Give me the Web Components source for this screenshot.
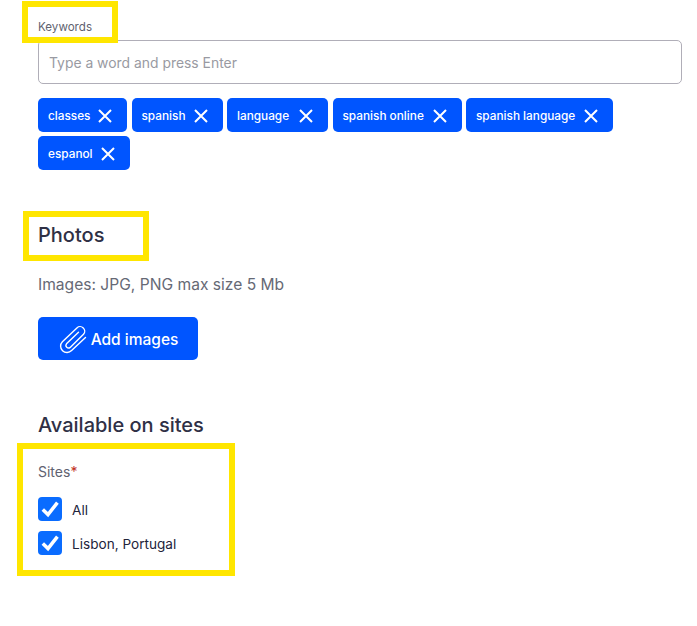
<!DOCTYPE html>
<html><head><meta charset="utf-8">
<style>
html,body{margin:0;padding:0;background:#fff}
body{width:697px;height:626px;overflow:hidden;position:relative;font-family:Inter,"Liberation Sans",sans-serif}
</style></head><body>
<template id="chip-t"><style>
:host{display:inline-flex;align-items:center;justify-content:space-between;height:34px;box-sizing:border-box;background:#0055ff;color:#fff;border-radius:5px;padding:2px 15px 0 10px;font-size:11.8px;font-weight:500}
svg{width:14px;height:14px;display:block}
</style><slot></slot><svg viewBox="0 0 14 14"><path d="M1 1 13 13M13 1 1 13" stroke="#fff" stroke-width="2" fill="none"/></svg></template>
<template id="check-t"><style>
:host{display:flex;align-items:center;gap:10px;height:24px;font-size:13.6px;color:#22233a}
.b{width:24px;height:24px;border-radius:4px;background:#0a6cff;display:flex;align-items:center;justify-content:center}
svg{width:24px;height:24px;display:block}
.t{padding-top:2px}
</style><span class="b"><svg viewBox="0 0 24 24"><path d="M4.8 12.5 10 17.6 19.4 5.6" stroke="#fff" stroke-width="3.5" fill="none"/></svg></span><span class="t"><slot></slot></span></template>
<script>
function def(name,tpl){customElements.define(name,class extends HTMLElement{constructor(){super();this.attachShadow({mode:'open'}).appendChild(document.getElementById(tpl).content.cloneNode(true))}})}
def('tag-chip','chip-t');def('site-check','check-t');
customElements.define('page-form',class extends HTMLElement{constructor(){super();this.attachShadow({mode:'open'}).innerHTML=`<style>
:host{display:flex;flex-direction:column;padding:20px 15px 0 38px;color:#2f3045}
.lab{font-size:11.6px;line-height:14px;color:#5f6270}
.input{margin-top:6px;height:44px;box-sizing:border-box;border:1px solid #b0aeb8;border-radius:5px;padding:2px 10px 0;display:flex;align-items:center;font-size:13.9px;color:#999aa2}
.chips{margin-top:14px;display:grid;grid-template-columns:89px 91px 101px 129px 147px;column-gap:4.5px;row-gap:4px;justify-content:start}
.c6{width:92px}
h2{margin:0;font-size:20px;line-height:26px;font-weight:450;color:#2f3045}
.ph{margin-top:52px}
.hint{margin-top:27px;font-size:15.6px;line-height:20px;color:#666975}
.btn{margin-top:22px;width:160px;height:43px;background:#0055ff;color:#fff;border-radius:5px;display:flex;align-items:center;justify-content:center;gap:3px;font-size:15.5px;font-weight:500}
.btn svg{width:30px;height:30px;display:block}
.btn span{padding-top:2px}
.av{margin-top:52px}
.sites{margin-top:25px;font-size:14px;line-height:18px;color:#5f6270}
.sites b{color:#c0301c;font-weight:400}
.list{margin-top:16px;display:flex;flex-direction:column;gap:10px}
</style>
<div class="lab">Keywords</div>
<div class="input">Type a word and press Enter</div>
<div class="chips"><tag-chip>classes</tag-chip><tag-chip>spanish</tag-chip><tag-chip>language</tag-chip><tag-chip>spanish online</tag-chip><tag-chip>spanish language</tag-chip><tag-chip class="c6">espanol</tag-chip></div>
<h2 class="ph">Photos</h2>
<div class="hint">Images: JPG, PNG max size 5 Mb</div>
<div class="btn"><svg viewBox="0 0 30 30"><path d="M27.5 13.5 13.6 26.6a6.4 6.4 0 0 1-9.2-8.9L18.9 3.9a4.6 4.6 0 0 1 6.6 6.4L12.2 23.4a2.6 2.6 0 0 1-3.7-3.6L20.5 8.3" stroke="#fff" stroke-width="1.4" fill="none" stroke-linecap="round"/></svg><span>Add images</span></div>
<h2 class="av">Available on sites</h2>
<div class="sites">Sites<b>*</b></div>
<div class="list"><site-check>All</site-check><site-check>Lisbon, Portugal</site-check></div>`}});
customElements.define('hl-box',class extends HTMLElement{constructor(){super();this.attachShadow({mode:'open'}).innerHTML=`<style>:host{display:block;position:absolute;box-sizing:border-box;border:6px solid #ffe600;left:var(--x);top:var(--y);width:var(--w);height:var(--h)}</style>`}});
</script>
<page-form></page-form>
<hl-box style="--x:22px;--y:1px;--w:96px;--h:42px"></hl-box>
<hl-box style="--x:23px;--y:211px;--w:126px;--h:50px"></hl-box>
<hl-box style="--x:17px;--y:443px;--w:218px;--h:133px"></hl-box>
</body></html>
